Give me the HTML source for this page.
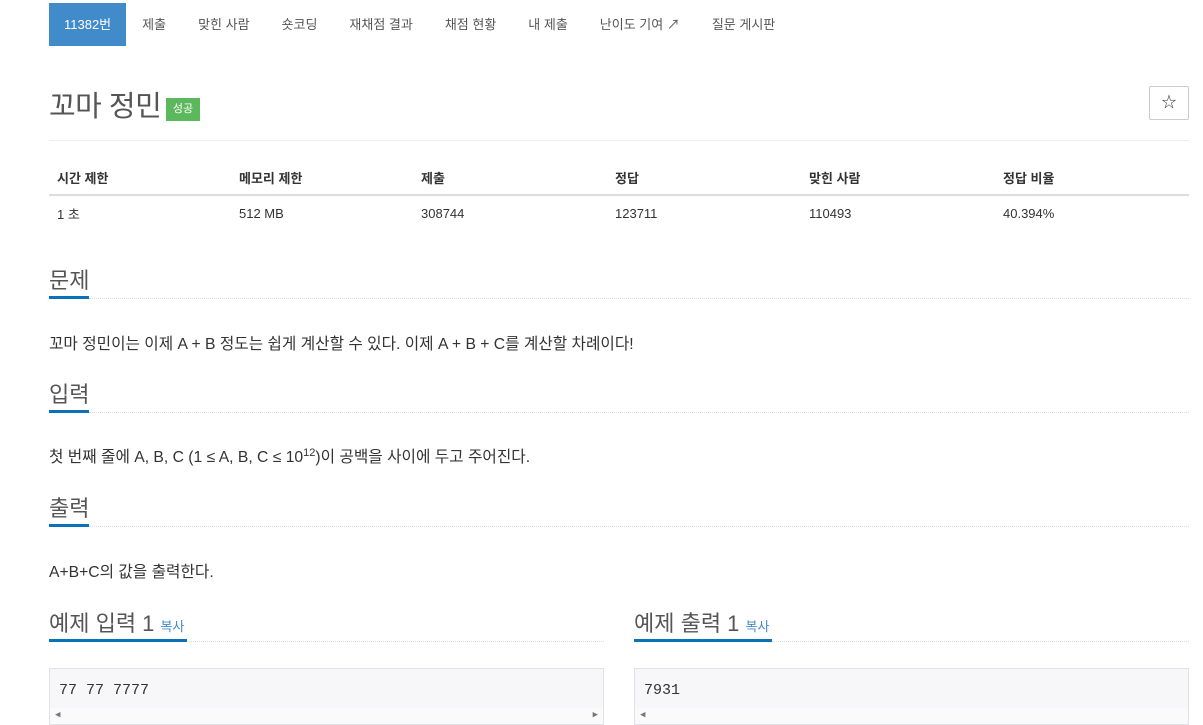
<!DOCTYPE html>
<html><head><meta charset="utf-8"><style>
*{box-sizing:border-box}
body{margin:0;width:1203px;height:725px;overflow:hidden;background:#fff;font-family:"Liberation Sans","Noto Sans CJK KR",sans-serif;color:#333;font-size:14px}
.nav{position:absolute;top:3px;left:49px;height:43px;display:flex}
.nav a{display:block;padding:0 16px;line-height:43px;font-size:13px;color:#555;text-decoration:none}
.nav a.act{background:#428bca;color:#fff;padding:0 15px}
h1{position:absolute;left:49px;top:83px;margin:0;font-weight:400;font-size:29px;color:#555;letter-spacing:-0.5px}
.badge{position:absolute;left:166px;top:98px;width:34px;height:23px;background:#5cb85c;color:#fff;font-size:11px;line-height:23px;text-align:center}
.star{position:absolute;left:1149px;top:86px;width:40px;height:34px;border:1px solid #ccc;border-radius:2px;text-align:center;line-height:32px;font-size:15px;color:#333}
.hr{position:absolute;left:49px;height:1px;background:#eee}
table{position:absolute;left:49px;top:160px;width:1140px;border-collapse:collapse;font-size:13px}
th{text-align:left;font-weight:700;padding:0 8px;height:35px;border-bottom:2px solid #ddd}
td{padding:0 8px;height:35px}
.h2{position:absolute;left:49px;font-size:22px;color:#555}
.h2 .u{position:absolute;left:0;top:33px;height:3px;background:#0b71b8;width:40px}
.dot{position:absolute;height:1px;border-top:1px dotted #ddd}
p{position:absolute;left:49px;margin:0;font-size:15.7px;color:#333;white-space:nowrap}
.copy{font-size:13px;color:#428bca}
.pre{position:absolute;top:668px;height:57px;background:#f7f7f9;border:1px solid #e1e1e8;font-family:"Liberation Mono",monospace;font-size:15px;padding:13px 9px;color:#333}
.sb{position:absolute;left:0;right:0;bottom:0;height:16px;background:#fafafa;font-size:9px;color:#777}
</style></head><body>
<div class="nav"><a class="act">11382번</a><a>제출</a><a>맞힌 사람</a><a>숏코딩</a><a>재채점 결과</a><a>채점 현황</a><a>내 제출</a><a>난이도 기여 ↗</a><a>질문 게시판</a></div>
<h1>꼬마 정민</h1><div class="badge">성공</div><div class="star">☆</div>
<div class="hr" style="top:140px;width:1140px"></div>
<table><tr><th style="width:182px">시간 제한</th><th style="width:182px">메모리 제한</th><th style="width:194px">제출</th><th style="width:194px">정답</th><th style="width:194px">맞힌 사람</th><th>정답 비율</th></tr>
<tr><td>1 초</td><td>512 MB</td><td>308744</td><td>123711</td><td>110493</td><td>40.394%</td></tr></table>
<div class="h2" style="top:263px">문제<div class="u"></div></div><div class="dot" style="left:89px;top:298px;width:1100px"></div>
<p style="top:331px">꼬마 정민이는 이제 A + B 정도는 쉽게 계산할 수 있다. 이제 A + B + C를 계산할 차례이다!</p>
<div class="h2" style="top:377px">입력<div class="u"></div></div><div class="dot" style="left:89px;top:412px;width:1100px"></div>
<p style="top:444px">첫 번째 줄에 A, B, C (1 ≤ A, B, C ≤ 10<sup style="font-size:11px">12</sup>)이 공백을 사이에 두고 주어진다.</p>
<div class="h2" style="top:491px">출력<div class="u"></div></div><div class="dot" style="left:89px;top:526px;width:1100px"></div>
<p style="top:559px">A+B+C의 값을 출력한다.</p>
<div class="h2" style="top:606px">예제 입력 1 <span class="copy">복사</span><div class="u" style="width:138px"></div></div><div class="dot" style="left:187px;top:641px;width:417px"></div>
<div class="h2" style="top:606px;left:634px">예제 출력 1 <span class="copy">복사</span><div class="u" style="width:138px"></div></div><div class="dot" style="left:772px;top:641px;width:417px"></div>
<div class="pre" style="left:49px;width:555px">77 77 7777<div class="sb"><span style="position:absolute;left:5px;top:2px">◀</span><span style="position:absolute;right:5px;top:2px">▶</span></div></div>
<div class="pre" style="left:634px;width:555px">7931<div class="sb"><span style="position:absolute;left:5px;top:2px">◀</span></div></div>
</body></html>
